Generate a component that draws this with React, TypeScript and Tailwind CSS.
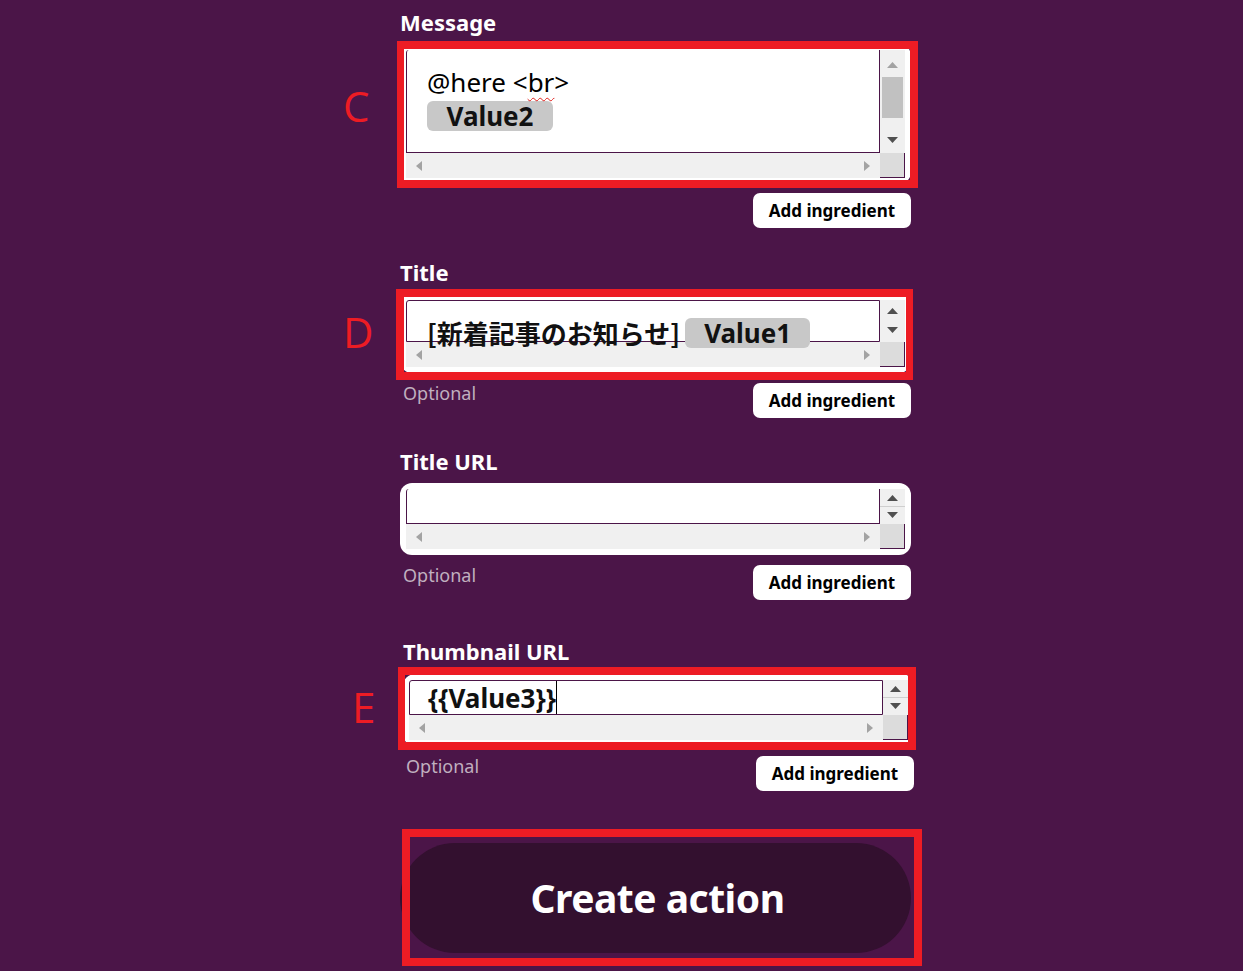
import type { ReactNode } from "react";

// scrollbar arrows, drawn as small triangles
function Tri({ dir, color }: { dir: "up" | "down" | "left" | "right"; color: string }) {
  if (dir === "up")
    return (
      <svg width="11" height="6" viewBox="0 0 11 6">
        <path d="M0 6 L5.5 0 L11 6 Z" fill={color} />
      </svg>
    );
  if (dir === "down")
    return (
      <svg width="11" height="6" viewBox="0 0 11 6">
        <path d="M0 0 L11 0 L5.5 6 Z" fill={color} />
      </svg>
    );
  if (dir === "left")
    return (
      <svg width="6" height="10" viewBox="0 0 6 10">
        <path d="M6 0 L6 10 L0 5 Z" fill={color} />
      </svg>
    );
  return (
    <svg width="6" height="10" viewBox="0 0 6 10">
      <path d="M0 0 L6 5 L0 10 Z" fill={color} />
    </svg>
  );
}

function MessageVScroll() {
  return (
    <div className="flex w-[25px] flex-col items-center bg-[#f0f0f0] pt-[12px] pb-[10px]">
      <Tri dir="up" color="#a3a3a3" />
      <div className="mt-[9px] h-[41px] w-[21px] bg-[#c1c1c1]" />
      <div className="flex-1" />
      <Tri dir="down" color="#505050" />
    </div>
  );
}

function PairVScroll({ sep }: { sep?: boolean }) {
  return (
    <div
      className={[
        "flex w-[25px] flex-col items-center justify-between bg-[#f0f0f0]",
        sep ? "py-[6px]" : "pt-[8px] pb-[9px]",
      ].join(" ")}
    >
      <Tri dir="up" color="#505050" />
      {sep && <div className="h-px w-full bg-[#cfcfcf]" />}
      <Tri dir="down" color="#505050" />
    </div>
  );
}

function ScrollFrame({
  content,
  vscroll,
  topBorder,
  children,
}: {
  content: string;
  vscroll: ReactNode;
  topBorder?: boolean;
  children?: ReactNode;
}) {
  return (
    <div className="flex flex-col">
      <div className="flex">
        <div
          className={[
            "relative z-10 flex-1 rounded-tl-[3px] border-r border-b border-l border-[#4b1548] bg-white",
            topBorder ? "border-t" : "",
            content,
          ].join(" ")}
        >
          {children}
        </div>
        {vscroll}
      </div>
      <div className="flex h-[25px]">
        <div className="flex flex-1 items-center justify-between bg-[#f0f0f0] px-[10px]">
          <Tri dir="left" color="#a3a3a3" />
          <Tri dir="right" color="#a3a3a3" />
        </div>
        <div className="w-[25px] border-r border-b border-[#4b1548] bg-[#dcdcdc]" />
      </div>
    </div>
  );
}

function Label({ children }: { children: ReactNode }) {
  return (
    <div className="h-[28px] text-[22px] leading-[28px] font-bold text-white font-['Noto_Sans',sans-serif]">
      {children}
    </div>
  );
}

function AddIngredient() {
  return (
    <button
      type="button"
      className="flex h-[35px] w-[158px] items-center justify-center rounded-[7px] bg-white text-[17px] font-bold text-black font-['Noto_Sans',sans-serif]"
    >
      Add ingredient
    </button>
  );
}

function Footer({ optional = true }: { optional?: boolean }) {
  return (
    <div className="mt-[10px] flex items-start justify-between">
      {optional ? (
        <div className="-mt-[2px] pl-[3px] text-[18px] leading-[24px] text-[#c0afbf] font-['Noto_Sans',sans-serif]">
          Optional
        </div>
      ) : (
        <div />
      )}
      <AddIngredient />
    </div>
  );
}

function Chip({ children, w }: { children: ReactNode; w: string }) {
  return (
    <div
      className={[
        "flex h-[30px] items-center justify-center rounded-[6px] bg-[#c8c8c8] text-[26px] leading-[30px] font-bold text-[#111] font-['Noto_Sans',sans-serif]",
        w,
      ].join(" ")}
    >
      {children}
    </div>
  );
}

function RedNote({ children, className }: { children: ReactNode; className: string }) {
  return (
    <div
      className={[
        "pointer-events-none absolute text-[42px] leading-none text-[#ed1c24] font-['Open_Sans',sans-serif]",
        className,
      ].join(" ")}
    >
      {children}
    </div>
  );
}

export default function App() {
  return (
    <div className="min-h-[971px] w-full overflow-hidden bg-[#4b1548] pt-[8px]">
      <div className="ml-[400px] w-[511px]">
        {/* Message */}
        <Label>Message</Label>
        <div className="relative mt-[8px] rounded-[12px] bg-white p-[6px]">
          <ScrollFrame content="h-[103px]" vscroll={<MessageVScroll />}>
            <div className="pt-[16px] pl-[20px] text-[26px] text-black font-['Noto_Sans',sans-serif]">
              <div className="leading-[32px]">
                @here &lt;
                <span className="underline decoration-[#e0201c] decoration-wavy decoration-1 underline-offset-[5px]">
                  br
                </span>
                &gt;
              </div>
              <div className="mt-[3px]">
                <Chip w="w-[126px]">Value2</Chip>
              </div>
            </div>
          </ScrollFrame>
          <div className="pointer-events-none absolute -top-[3px] -right-[7px] -bottom-[4px] -left-[3px] border-[8px] border-l-[7px] border-[#ed1c24]" />
          <RedNote className="-left-[57px] top-[41px]">C</RedNote>
        </div>
        <div className="mt-[9px] flex justify-end">
          <AddIngredient />
        </div>

        {/* Title */}
        <div className="mt-[30px]">
          <Label>Title</Label>
        </div>
        <div className="relative mt-[8px] rounded-[12px] bg-white p-[6px]">
          <ScrollFrame content="h-[42px]" vscroll={<PairVScroll />} topBorder>
            <div className="flex items-center pt-[17px] pl-[20px]">
              <span className="text-[26px] leading-[30px] font-bold text-[#111] font-['Noto_Sans_CJK_JP',sans-serif]">
                [新着記事のお知らせ]
              </span>
              <div className="ml-[5px]">
                <Chip w="w-[125px]">Value1</Chip>
              </div>
            </div>
          </ScrollFrame>
          <div className="pointer-events-none absolute -top-[5px] -right-[2px] -bottom-[7px] -left-[4px] border-[8px] border-r-[7px] border-[#ed1c24]" />
          <RedNote className="-left-[57px] top-[17px]">D</RedNote>
        </div>
        <Footer />

        {/* Title URL */}
        <div className="mt-[29px]">
          <Label>Title URL</Label>
        </div>
        <div className="mt-[8px] rounded-[12px] bg-white p-[6px]">
          <ScrollFrame content="h-[35px]" vscroll={<PairVScroll sep />} />
        </div>
        <Footer />

        {/* Thumbnail URL */}
        <div className="ml-[3px] w-[511px]">
          <div className="mt-[37px]">
            <Label>Thumbnail URL</Label>
          </div>
          <div className="relative mt-[9px] rounded-[12px] bg-white p-[6px]">
            <ScrollFrame content="h-[35px]" vscroll={<PairVScroll sep />} topBorder>
              <div className="flex h-full items-center pl-[18px]">
                <span className="text-[26px] leading-[30px] font-bold text-[#111] font-['Noto_Sans',sans-serif]">
                  {"{{Value3}}"}
                </span>
                <span className="h-[33px] w-px bg-black" />
              </div>
            </ScrollFrame>
            <div className="pointer-events-none absolute -top-[7px] -right-[2px] -bottom-[4px] -left-[5px] border-[8px] border-l-[7px] border-[#ed1c24]" />
            <RedNote className="-left-[51px] top-[12px]">E</RedNote>
          </div>
          <Footer />
        </div>

        {/* Create action */}
        <div className="relative mt-[52px]">
          <button
            type="button"
            className="flex h-[110px] w-[511px] items-center justify-center rounded-full bg-[#33102f] pl-[4px] text-[39px] font-bold tracking-[-0.5px] text-white font-['Noto_Sans',sans-serif]"
          >
            Create action
          </button>
          <div className="pointer-events-none absolute -top-[14px] -right-[11px] -bottom-[13px] left-[2px] border-[8px] border-[#ed1c24]" />
        </div>
      </div>
    </div>
  );
}
